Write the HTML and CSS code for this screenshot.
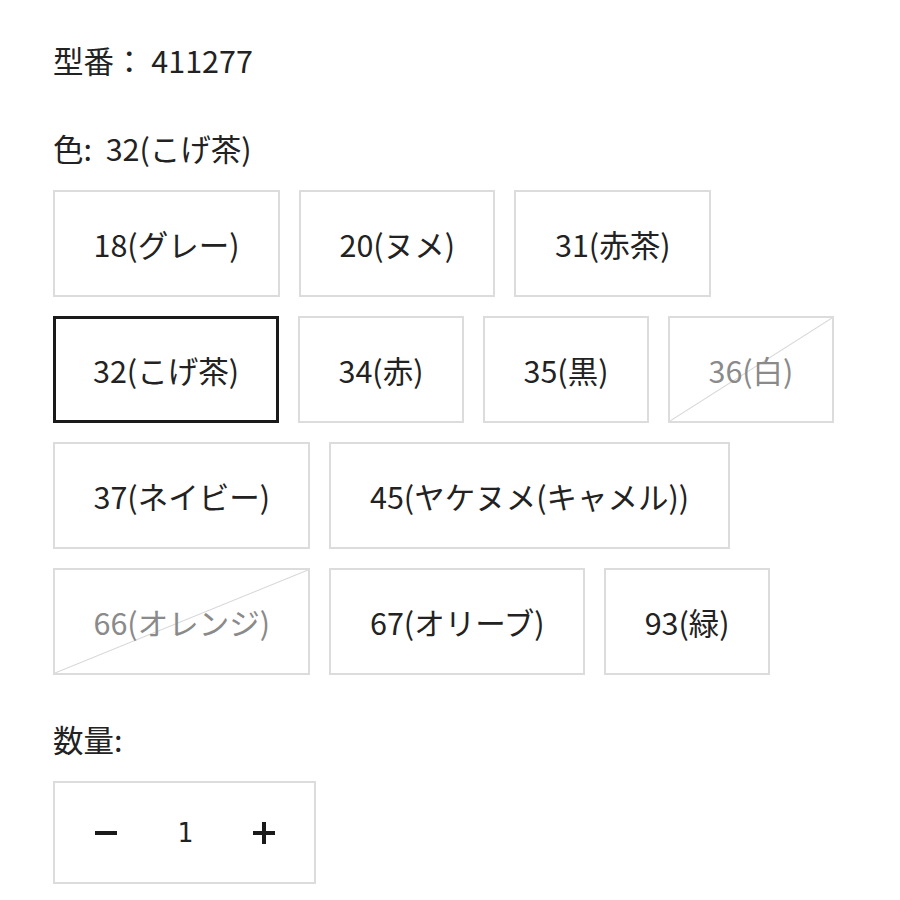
FILE: index.html
```html
<!DOCTYPE html>
<html lang="ja">
<head>
<meta charset="utf-8">
<link rel="stylesheet" href="styles.css">
</head>
<body>
<div class="page">
  <div class="label sku">型番： 411277</div>
  <div class="label color-label">色:&nbsp; 32(こげ茶)</div>
  <div class="swatches">
    <div class="row">
      <div class="opt">18(グレー)</div>
      <div class="opt">20(ヌメ)</div>
      <div class="opt">31(赤茶)</div>
    </div>
    <div class="row">
      <div class="opt selected">32(こげ茶)</div>
      <div class="opt">34(赤)</div>
      <div class="opt">35(黒)</div>
      <div class="opt disabled">36(白)</div>
    </div>
    <div class="row">
      <div class="opt">37(ネイビー)</div>
      <div class="opt">45(ヤケヌメ(キャメル))</div>
    </div>
    <div class="row">
      <div class="opt disabled">66(オレンジ)</div>
      <div class="opt">67(オリーブ)</div>
      <div class="opt">93(緑)</div>
    </div>
  </div>
  <div class="label qty-label">数量:</div>
  <div class="qty">
    <span class="qbtn"><svg width="22" height="22" viewBox="0 0 22 22"><rect x="0" y="9" width="22" height="4" fill="#1a1a1a"/></svg></span>
    <span class="qval">1</span>
    <span class="qbtn"><svg width="22" height="22" viewBox="0 0 22 22"><rect x="0" y="9" width="22" height="4" fill="#1a1a1a"/><rect x="9" y="0" width="4" height="22" fill="#1a1a1a"/></svg></span>
  </div>
</div>
</body>
</html>
```
FILE: styles.css
```css
html, body {
  margin: 0;
  padding: 0;
  background: #fff;
}
.page {
  padding: 41px 0 0 53px;
  font-family: "Noto Sans CJK JP", "Noto Sans", sans-serif;
  color: #222;
  font-size: 30.5px;
}
.label {
  line-height: 38px;
}
.sku {
  margin-bottom: 50px;
}
.color-label {
  margin-bottom: 23px;
}
.swatches {
  display: flex;
  flex-direction: column;
  gap: 19px;
}
.row {
  display: flex;
  gap: 19px;
}
.opt {
  box-sizing: border-box;
  height: 107px;
  padding: 0 38.5px;
  border: 2px solid #dcdcdc;
  display: flex;
  align-items: center;
  justify-content: center;
  white-space: nowrap;
  color: #222;
}
.opt.selected {
  border: 3px solid #1a1a1a;
  padding: 0 37px;
}
.opt.disabled {
  color: #8a8a8a;
  background: linear-gradient(to bottom right, transparent calc(50% - 1px), #d6d6d6 50%, transparent calc(50% + 1px));
}
.qty-label {
  margin-top: 45px;
  margin-bottom: 23px;
}
.qty {
  box-sizing: border-box;
  width: 263px;
  height: 103px;
  border: 2px solid #dcdcdc;
  display: flex;
  align-items: center;
  padding: 0 39px 0 40px;
  justify-content: space-between;
}
.qbtn {
  display: flex;
  width: 22px;
  height: 22px;
}
.qval {
  font-family: "DejaVu Sans Mono", monospace;
  font-size: 26px;
  color: #222;
}
```
